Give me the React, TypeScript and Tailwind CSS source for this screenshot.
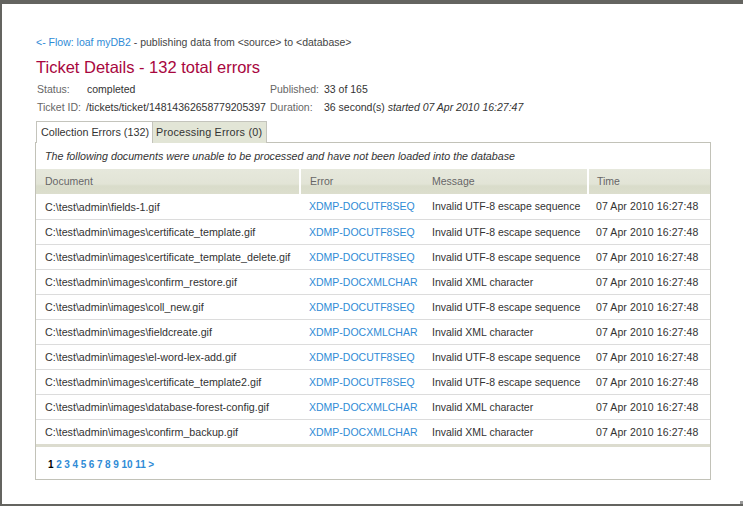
import React from "react";

type Row = { doc: string; code: string; msg: string };

const XML = "Invalid XML character";
const UTF = "Invalid UTF-8 escape sequence";

const rows: Row[] = [
  { doc: "C:\\test\\admin\\fields-1.gif", code: "XDMP-DOCUTF8SEQ", msg: UTF },
  { doc: "C:\\test\\admin\\images\\certificate_template.gif", code: "XDMP-DOCUTF8SEQ", msg: UTF },
  { doc: "C:\\test\\admin\\images\\certificate_template_delete.gif", code: "XDMP-DOCUTF8SEQ", msg: UTF },
  { doc: "C:\\test\\admin\\images\\confirm_restore.gif", code: "XDMP-DOCXMLCHAR", msg: XML },
  { doc: "C:\\test\\admin\\images\\coll_new.gif", code: "XDMP-DOCUTF8SEQ", msg: UTF },
  { doc: "C:\\test\\admin\\images\\fieldcreate.gif", code: "XDMP-DOCXMLCHAR", msg: XML },
  { doc: "C:\\test\\admin\\images\\el-word-lex-add.gif", code: "XDMP-DOCUTF8SEQ", msg: UTF },
  { doc: "C:\\test\\admin\\images\\certificate_template2.gif", code: "XDMP-DOCUTF8SEQ", msg: UTF },
  { doc: "C:\\test\\admin\\images\\database-forest-config.gif", code: "XDMP-DOCXMLCHAR", msg: XML },
  { doc: "C:\\test\\admin\\images\\confirm_backup.gif", code: "XDMP-DOCXMLCHAR", msg: XML },
];

const pages = ["2", "3", "4", "5", "6", "7", "8", "9", "10", "11", ">"];

export default function App() {
  return (
    <div className="w-[743px] h-[506px] bg-[#646460] pt-[4px] pl-[2px] pb-[2px] flex font-['Liberation_Sans',Arial,sans-serif]">
      <div className="flex-1 bg-white pl-[33px] pt-[31px] relative">
        {/* breadcrumb */}
        <div className="pl-[1px] text-[10.5px] leading-[14px] text-[#444]">
          <span className="text-[#2f8bd6]">&lt;- Flow: loaf myDB2</span> - publishing data from &lt;source&gt; to &lt;database&gt;
        </div>

        <h1 className="pl-[1px] mt-[8px] text-[16.5px] leading-[20px] text-[#a8063e]">
          Ticket Details - 132 total errors
        </h1>

        <div className="mt-[3px] grid grid-cols-[48px_185px_54px_1fr] text-[10.5px] leading-[18px] text-[#333] pl-[2px]">
          <span className="text-[#666]">Status:</span>
          <span className="pl-[2px]">completed</span>
          <span className="text-[#666]">Published:</span>
          <span>33 of 165</span>
          <span className="text-[#666]">Ticket ID:</span>
          <span className="pl-[1px]">/tickets/ticket/14814362658779205397</span>
          <span className="text-[#666]">Duration:</span>
          <span>
            36 second(s) <i>started 07 Apr 2010 16:27:47</i>
          </span>
        </div>

        {/* tabs */}
        <div className="mt-[5px] flex text-[10.8px] leading-[20px] text-[#333] pl-[1px]">
          <div className="w-[117px] border border-b-0 border-[#c4c4bc] bg-white pl-[4px] h-[22px] relative z-10 whitespace-nowrap">
            Collection Errors (132)
          </div>
          <div className="w-[114px] border border-l-0 border-b-0 border-[#c4c4bc] bg-[#e2e5d6] pl-[3px] h-[22px] whitespace-nowrap tracking-[0.2px]">
            Processing Errors (0)
          </div>
        </div>

        {/* panel */}
        <div className="w-[676px] h-[338px] -mt-[1px] border border-[#c2c2b8] bg-white">
          <div className="h-[26px] pl-[9px] flex items-center text-[10.7px] italic text-[#333]">
            The following documents were unable to be processed and have not been loaded into the database
          </div>
          <table className="w-[674px] table-fixed border-collapse text-[10.5px] text-[#333]">
            <colgroup>
              <col className="w-[264px]" />
              <col className="w-[122px]" />
              <col className="w-[166px]" />
              <col className="w-[122px]" />
            </colgroup>
            <thead>
              <tr className="h-[25px] bg-[linear-gradient(#e6e8dc_0%,#e2e4d6_60%,#d9dcca_68%,#dcdecd_100%)] text-[#666] text-left">
                <th className="font-normal pl-[9px] pt-[1px] border-r-2 border-white">Document</th>
                <th className="font-normal pl-[9px] pt-[1px]">Error</th>
                <th className="font-normal pl-[10px] pt-[1px] border-r-2 border-white">Message</th>
                <th className="font-normal pl-[8px] pt-[1px]">Time</th>
              </tr>
            </thead>
            <tbody>
              {rows.map((r) => (
                <tr key={r.doc} className="h-[25px] border-b border-[#dcdcdc]">
                  <td className="pl-[9px] pt-[2px] whitespace-nowrap text-[10.7px]">{r.doc}</td>
                  <td className="pl-[9px] pt-[2px] text-[#2f8bd6] whitespace-nowrap">{r.code}</td>
                  <td className="pl-[10px] pt-[2px] whitespace-nowrap">{r.msg}</td>
                  <td className="pl-[8px] pt-[2px] whitespace-nowrap tracking-[0.1px]">07 Apr 2010 16:27:48</td>
                </tr>
              ))}
            </tbody>
          </table>
          <div className="h-[3px] bg-[#dcdccf] -mt-[1px]" />
          <div className="mt-[11px] pl-[12px] flex gap-[2.6px] text-[10px] leading-[14px] font-bold">
            <span className="text-black">1</span>
            {pages.map((p) => (
              <span key={p} className="text-[#2f8bd6]">
                {p}
              </span>
            ))}
          </div>
        </div>
        <div className="absolute right-0 bottom-0 w-[3px] h-[3px] bg-[#999]" />
      </div>
    </div>
  );
}
